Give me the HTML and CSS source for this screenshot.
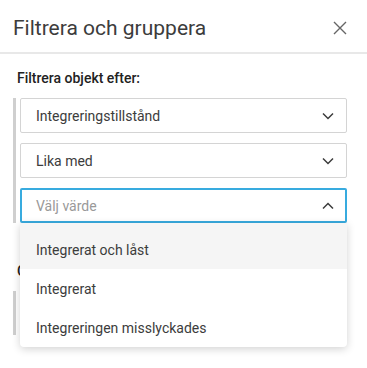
FILE: index.html
```html
<!DOCTYPE html>
<html lang="sv">
<head>
<meta charset="utf-8">
<link rel="stylesheet" href="styles.css">
</head>
<body>
<div class="panel">
  <header class="panel-header">
    <h1 class="title">Filtrera och gruppera</h1>
    <button class="close" aria-label="Stäng">
      <svg width="14" height="14" viewBox="0 0 14 14"><path d="M1 1L13 13M13 1L1 13" stroke="#666" stroke-width="1.4" fill="none"/></svg>
    </button>
  </header>
  <div class="panel-body">
    <div class="section">
      <div class="section-label">Filtrera objekt efter:</div>
      <div class="group">
        <div class="select">
          <span class="select-text">Integreringstillstånd</span>
          <svg class="chev" width="12" height="8" viewBox="0 0 12 8"><path d="M1 1.5L6 6.5L11 1.5" stroke="#3c3c3c" stroke-width="1.5" fill="none"/></svg>
        </div>
        <div class="select">
          <span class="select-text">Lika med</span>
          <svg class="chev" width="12" height="8" viewBox="0 0 12 8"><path d="M1 1.5L6 6.5L11 1.5" stroke="#3c3c3c" stroke-width="1.5" fill="none"/></svg>
        </div>
        <div class="select-wrap">
          <div class="select is-open">
            <span class="select-text placeholder">Välj värde</span>
            <svg class="chev" width="12" height="8" viewBox="0 0 12 8"><path d="M1 6.5L6 1.5L11 6.5" stroke="#3c3c3c" stroke-width="1.5" fill="none"/></svg>
          </div>
          <ul class="menu">
            <li class="menu-item is-active">Integrerat och låst</li>
            <li class="menu-item">Integrerat</li>
            <li class="menu-item">Integreringen misslyckades</li>
          </ul>
        </div>
      </div>
    </div>
    <div class="section section-group">
      <div class="section-label">Gruppera efter:</div>
      <div class="group group-short">
        <div class="select">
          <span class="select-text">Ingen</span>
        </div>
      </div>
    </div>
  </div>
</div>
</body>
</html>
```

FILE: styles.css
```css
* { box-sizing: border-box; }
html, body {
  margin: 0;
  padding: 0;
  background: #fff;
}
body {
  font-family: Roboto, "Noto Sans", sans-serif;
  color: #3c3c3c;
  width: 367px;
  height: 368px;
  overflow: hidden;
}
.panel-header {
  height: 54px;
  display: flex;
  align-items: center;
  justify-content: space-between;
  padding: 3px 20px 0 13px;
  border-bottom: 2px solid #e8e8e8;
}
.title {
  margin: 0;
  font-size: 21px;
  font-weight: 400;
  color: #3c3c3c;
}
.close {
  border: 0;
  background: none;
  padding: 0;
  width: 14px;
  height: 14px;
  display: flex;
}
.panel-body {
  padding: 14px 20px 0 13px;
}
.section-label {
  font-size: 14px;
  font-weight: 500;
  padding-left: 4px;
  line-height: 20px;
  margin-bottom: 10px;
  color: #222;
}
.group {
  border-left: 3px solid #cfcfcf;
  padding-left: 4px;
  display: flex;
  flex-direction: column;
  gap: 10px;
}
.select-wrap {
  position: relative;
}
.select {
  height: 35px;
  border: 1px solid #d4d4d4;
  border-radius: 2px;
  display: flex;
  align-items: center;
  justify-content: space-between;
  padding: 0 12px 0 15px;
  font-size: 14px;
  background: #fff;
}
.select.is-open {
  border-color: #38abdf;
  border-width: 2px;
  padding-left: 14px;
  padding-right: 11px;
}
.placeholder { color: #999; }
.menu {
  position: absolute;
  top: 100%;
  left: 0;
  right: 0;
  margin: 0;
  padding: 0;
  list-style: none;
  background: #fff;
  border-radius: 0 0 4px 4px;
  box-shadow: 0 2px 8px rgba(0,0,0,0.18);
  z-index: 2;
}
.menu-item {
  font-size: 14px;
  height: 39px;
  display: flex;
  align-items: center;
  padding-left: 16px;
  color: #3c3c3c;
}
.menu-item.is-active {
  background: #f5f5f5;
  height: 46px;
  padding-top: 8px;
}
.section-group {
  margin-top: 38px;
}
.group-short .select { height: 44px; }
```
